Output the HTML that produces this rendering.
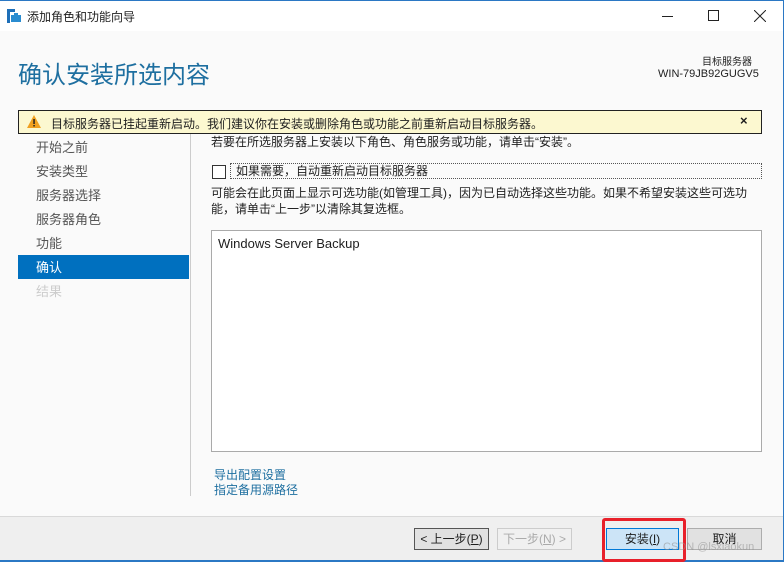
<!DOCTYPE html>
<html><head><meta charset="utf-8"><style>
*{margin:0;padding:0;box-sizing:border-box}
body{width:784px;height:562px;overflow:hidden;background:#fafafa;font-family:"Liberation Sans","Noto Sans CJK SC",sans-serif;font-size:12px;color:#1e1e1e;position:relative}
.a{position:absolute;white-space:nowrap}
.nav{position:absolute;left:36px;font-size:13px;color:#555}
.btn{position:absolute;top:528px;height:22px;border:1px solid #adadad;background:#e1e1e1;font-size:12px;text-align:center;line-height:20px}
</style></head><body>
<div class="a" style="left:0;top:0;width:784px;height:1px;background:#2b78c4"></div>
<div class="a" style="left:0;top:1px;width:783px;height:30px;background:#fff"></div>
<div class="a" style="left:783px;top:0;width:1px;height:562px;background:#2b78c4"></div>
<svg class="a" style="left:7px;top:9px" width="14" height="14"><rect x="0" y="0" width="3" height="14" fill="#1e6fb8"/><rect x="0" y="0" width="8" height="3" fill="#1e6fb8"/><rect x="4" y="6" width="10" height="7" fill="#2a8cd0"/><rect x="7" y="4" width="4" height="2" fill="#2a8cd0"/></svg>
<div class="a" style="left:27px;top:8px;font-size:12px">添加角色和功能向导</div>
<div class="a" style="left:662px;top:16px;width:11px;height:1px;background:#222"></div>
<div class="a" style="left:708px;top:10px;width:11px;height:11px;border:1px solid #222"></div>
<svg class="a" style="left:754px;top:10px" width="12" height="12"><path d="M0 0L12 12M12 0L0 12" stroke="#222" stroke-width="1"/></svg>
<div class="a" style="left:18px;top:55px;font-size:24px;color:#1e6fa0">确认安装所选内容</div>
<div class="a" style="left:702px;top:53px;font-size:10px">目标服务器</div>
<div class="a" style="left:658px;top:68px;font-size:11px">WIN-79JB92GUGV5</div>
<div class="a" style="left:18px;top:110px;width:744px;height:24px;border:1px solid #222;background:#fcf8d0"></div>
<svg class="a" style="left:27px;top:115px" width="14" height="13"><path d="M7 0L14 13H0Z" fill="#f0a020"/><rect x="6.3" y="4" width="1.5" height="5" fill="#222"/><rect x="6.3" y="10" width="1.5" height="1.5" fill="#222"/></svg>
<div class="a" style="left:51px;top:115px;font-size:12px">目标服务器已挂起重新启动。我们建议你在安装或删除角色或功能之前重新启动目标服务器。</div>
<div class="a" style="left:740px;top:113px;font-size:13px;font-weight:bold">×</div>
<div class="a" style="left:190px;top:134px;width:1px;height:362px;background:#ccc"></div>
<div class="nav" style="top:137px">开始之前</div>
<div class="nav" style="top:161px">安装类型</div>
<div class="nav" style="top:185px">服务器选择</div>
<div class="nav" style="top:209px">服务器角色</div>
<div class="nav" style="top:233px">功能</div>
<div class="a" style="left:18px;top:255px;width:171px;height:24px;background:#0070bf"></div>
<div class="nav" style="top:257px;color:#fff">确认</div>
<div class="nav" style="top:281px;color:#ccc">结果</div>
<div class="a" style="left:211px;top:133px">若要在所选服务器上安装以下角色、角色服务或功能，请单击“安装”。</div>
<div class="a" style="left:212px;top:165px;width:14px;height:14px;border:1px solid #333;background:#fff"></div>
<div class="a" style="left:230px;top:163px;width:532px;height:16px;border:1px dotted #555"></div>
<div class="a" style="left:236px;top:162px">如果需要，自动重新启动目标服务器</div>
<div class="a" style="left:211px;top:184px">可能会在此页面上显示可选功能(如管理工具)，因为已自动选择这些功能。如果不希望安装这些可选功</div>
<div class="a" style="left:211px;top:200px">能，请单击“上一步”以清除其复选框。</div>
<div class="a" style="left:211px;top:230px;width:551px;height:222px;border:1px solid #aaa;background:#fff"></div>
<div class="a" style="left:218px;top:236px;font-size:13px">Windows Server Backup</div>
<div class="a" style="left:214px;top:466px;color:#1e6fa0">导出配置设置</div>
<div class="a" style="left:214px;top:481px;color:#1e6fa0">指定备用源路径</div>
<div class="a" style="left:0;top:516px;width:783px;height:44px;background:#efefef;border-top:1px solid #d9d9d9"></div>
<div class="a" style="left:0;top:560px;width:784px;height:2px;background:#2b78c4"></div>
<div class="btn" style="left:414px;width:75px;border-color:#555">&lt; 上一步(<u>P</u>)</div>
<div class="btn" style="left:497px;width:75px;color:#aaa;background:#f0f0f0;border-color:#ccc">下一步(<u>N</u>) &gt;</div>
<div class="btn" style="left:606px;width:73px;background:#cce4f7;border-color:#0078d7">安装(<u>I</u>)</div>
<div class="btn" style="left:687px;width:75px">取消</div>
<div class="a" style="left:602px;top:518px;width:84px;height:44px;border:3px solid #e8202a;border-radius:3px"></div>
<div class="a" style="left:663px;top:541px;font-size:11px;color:rgba(150,150,150,.6)">CSDN @lsxiaokun</div>
</body></html>
